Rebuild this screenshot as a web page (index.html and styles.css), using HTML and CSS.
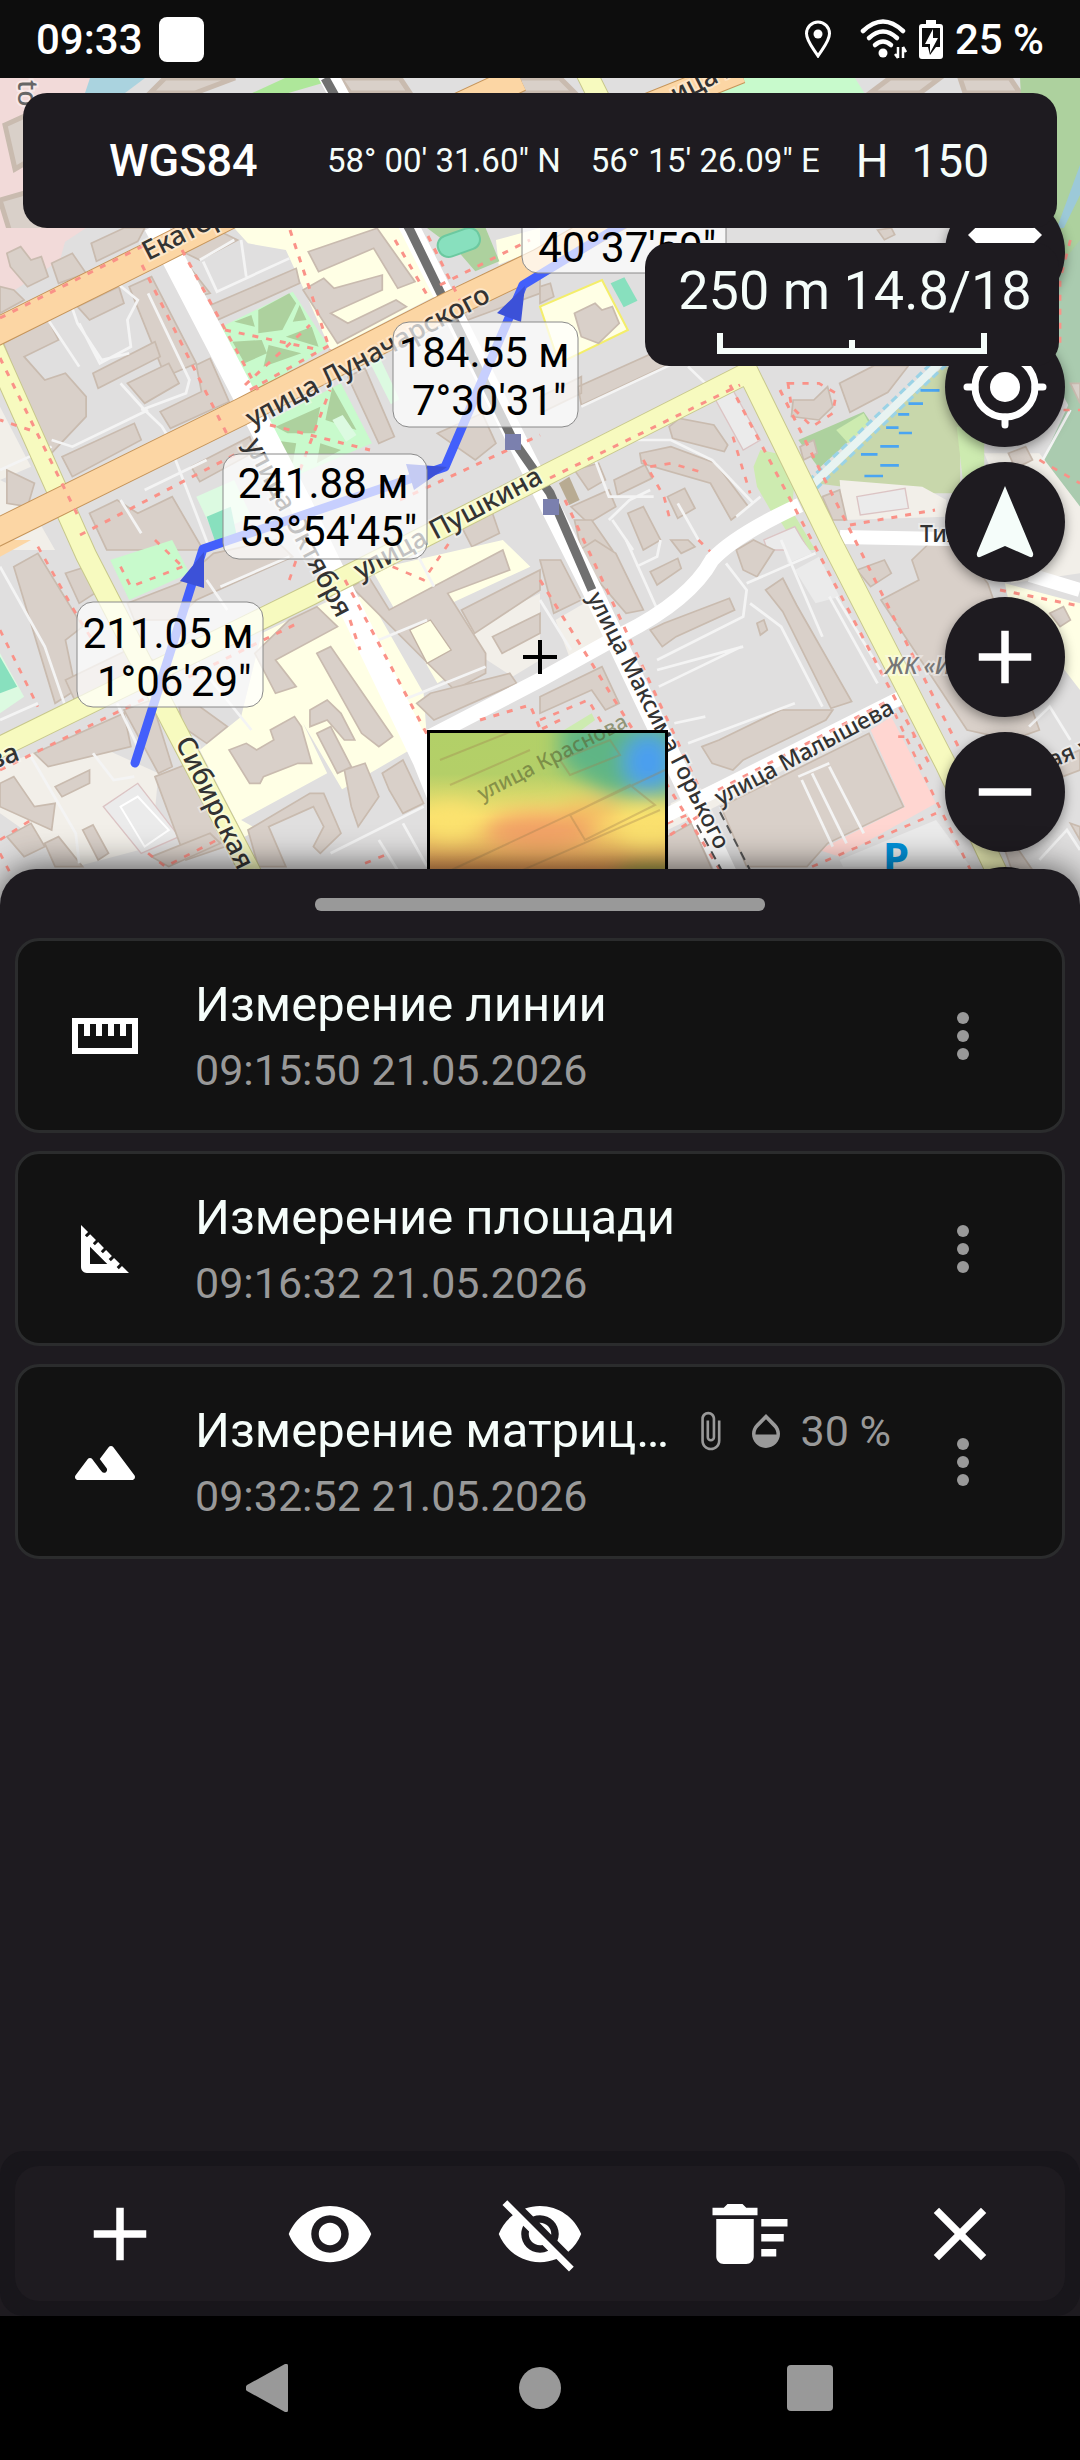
FILE: index.html
```html
<!DOCTYPE html>
<html lang="ru">

<head>
    <meta charset="UTF-8">
    <meta name="viewport" content="width=device-width, initial-scale=1.0">
    <title>Измерения</title>
    <link rel="stylesheet" href="styles.css">
</head>

<body>
    <!-- Status bar -->
    <header class="status-bar">
        <span>09:33</span>
        <span class="status-app"></span>
        <div class="status-icons">
            <svg class="status-pin" viewBox="0 0 28 38" width="28" height="38">
                <path d="M14 36C9 28 2.500 21 2.500 13.500a11.500 11.500 0 0 1 23 0C25.500 21 19 28 14 36z" fill="none" stroke="#fff" stroke-width="3"/>
                <circle cx="14" cy="14" r="4.500" fill="#fff"/>
            </svg>
            <svg viewBox="0 0 47 40" width="47" height="40">
                <g fill="none" stroke="#fff" stroke-width="4.500" stroke-linecap="round">
                    <path d="M3 12Q23-7 43 12"/>
                    <path d="M9 19Q23 6 37 19"/>
                    <path d="M15 26Q23 19 31 26"/>
                </g>
                <circle cx="23" cy="34" r="4.500" fill="#fff"/>
                <path d="M38 28v11M35 35l3 4M43 39V28M43 28l3 5" fill="none" stroke="#fff" stroke-width="2.500"/>
            </svg>
            <svg viewBox="0 0 24 39" width="24" height="39">
                <path d="M7 0h10v4h4q3 0 3 3v29q0 3-3 3H3q-3 0-3-3V7q0-3 3-3h4z" fill="#fff"/>
                <path d="M3 8h18v19h-4L11 35 9 27H3z" fill="#0d0d0d"/>
                <path d="M14 9L6 24h5v9l8-15h-5z" fill="#fff"/>
            </svg>
            <span>25 %</span>
        </div>
    </header>

    <main class="screen">
        <section class="map">
            <svg class="map-canvas" viewBox="0 78 1080 862" preserveAspectRatio="xMidYMin slice">
                <defs>
                    <linearGradient id="heat" x1="0" y1="0" x2="0" y2="1">
                        <stop offset="0" stop-color="#b2d068"/>
                        <stop offset=".25" stop-color="#b4cf68"/>
                        <stop offset=".5" stop-color="#fbe26e"/>
                        <stop offset=".7" stop-color="#efb862"/>
                        <stop offset="1" stop-color="#c5583c"/>
                    </linearGradient>
                    <filter id="soft" x="-50%" y="-50%" width="200%" height="200%">
                        <feGaussianBlur stdDeviation="10"/>
                    </filter>
                    <clipPath id="heat-clip">
                        <rect x="429" y="732" width="237" height="230"/>
                    </clipPath>
                </defs>
                <rect y="78" width="1080" height="862" fill="#e0dfdf"/>

                <!-- Strip above and beside the coordinate panel -->
                <path d="M0 78h110L60 260 0 300z" fill="#f2dad9"/>
                <path d="M90 78h55l-40 30H80z" fill="#aad3df"/>
                <g class="building">
                    <path d="M5 125l22-10 12 40-24 14z"/>
                    <path d="M0 200l28-8 18 40-30 20z"/>
                    <path d="M165 78h70l-40 15h-45z"/>
                    <path d="M340 78h60l10 15h-60z"/>
                    <path d="M520 78h40l15 15h-60z"/>
                    <path d="M890 78h50l-20 15h-50zM960 78h50l10 15h-55z"/>
                </g>
                <path d="M285 78h55l-55 16h-35z" fill="#aee79a"/>
                <path d="M725 78h130l10 16H700z" fill="#c8facc"/>
                <path d="M1020 78h60v230l-52-80z" fill="#add19e"/>
                <path d="M1080 165l-22 60v15l22-45z" fill="#9cc9d8"/>

                <!-- Upper left blocks -->
                <g transform="translate(0 220) scale(.3444 .3333)">
                    <path d="M0 24h250L20 180H0z" fill="#f2dad9"/>
                    <path d="M680 24h500L1280 220 960 390 870 180 830 90 720 70z" fill="#ffffe5"/>
                    <path d="M1440 60l128-36v60l-120 50z" fill="#ffffe5"/>
                    <path d="M635 325l215-110 105 165-230 145z" fill="#c8facc"/>
                    <path d="M765 610l225-120 90 180-250 110z" fill="#c8facc"/>
                    <path d="M1240 24h170l40 100-70 30-50-60z" fill="#add19e"/>
                    <g fill="#add19e">
                        <path d="M750 270l90-50 20 30-40 80-70 10zM675 365l85-5 15 40-65 30zM780 375l95 25-110 40zM680 305l50-20 10 35zM870 255l20 45-40 5zM830 350l75-30 20 60z"/>
                        <path d="M800 620l130-60-15 80-80 0zM965 500l70 130-90-30zM790 660l70 10-10 60zM930 670l60 20-70 40z"/>
                    </g>
                    <rect x="1270" y="35" width="125" height="65" rx="30" transform="rotate(-20 1332 68)" fill="#88e0be" stroke="#6cc9a0" stroke-width="6"/>
                    <path d="M965 600l30-15 40 60-30 20zM1075 430l30-12 55 120-25 15z" fill="#dcfae1"/>
                    <path d="M570 830l110-50 50 110-110 50z" fill="#dcfae1"/>
                    <path d="M600 890l70-30 20 100-60 20z" fill="#88e0be"/>
                    <path d="M420 960l90-40 30 70H420z" fill="#c8facc"/>
                    <path d="M0 560l90 180-90 40zM0 780l60 30 100 180H0z" fill="#f2efe9"/>
                    <g class="building">
                        <path d="M265 70l95-46h60l-20 40-120 60z"/>
                        <path d="M20 100l40-20 30 40 30-10 20 60-60 30-50-60zM150 130l60-30 40 60-80 30zM0 200l40 10 30 30-70 40z"/>
                        <path d="M225 260l120-60 15 50-100 50z"/>
                        <path d="M375 200l65-30 130 260-90 40z"/>
                        <path d="M10 370l130-70 30 60-100 50 60 70 60-20 60 70 0 60-110 120z"/>
                        <path d="M270 460l180-95 15 45-180 95z"/>
                        <path d="M370 490l120-60 30 60-100 60z"/>
                        <path d="M465 575l120-60-15-80 40-20 55 130-170 80z"/>
                        <path d="M515 95L610 220l-40 10zM520 90l110-60 60 30-110 60z"/>
                        <path d="M590 265l270-120 10 45-260 120z"/>
                        <path d="M895 95l200-70 110 160-50 20-70-120-160 70z"/>
                        <path d="M880 210l60-35 30 30 140-40v45l-150 70 50 30 140-70 30 20-200 110z"/>
                        <path d="M180 710l210-100 20 50-200 110z"/>
                        <path d="M20 750l80 40-20 70-60-10z"/>
                        <path d="M555 740l170-90 15 45-160 90z"/>
                        <path d="M260 880l80-40 60 40 100-50 90 160H310z"/>
                        <path d="M1010 470l50-25 85 205-45 20z"/>
                        <path d="M1340 270l228-110v60l-210 80z"/>
                        <path d="M1270 640l130-60 40 90-60 50z"/>
                        <path d="M1340 920l90-40 20 60-80 40z"/>
                    </g>
                    <path class="path" d="M205 250l20 60 70 110 80-20M340 190l60 50-30 60 10 80-90 50-60-120M140 300l90 140M580 120l100-60M700 60l15 110M590 125l40 90 210-100M430 220l120 260-10 40-130 50M350 490l70 80 50 50 30 50M150 660l60 20 220-110M480 640l130 350M0 750l150-70M350 840l60 100M420 810l180-90"/>
                </g>

                <!-- Upper right blocks -->
                <g transform="translate(540 220) scale(.3444 .3333)">
                    <path d="M0 260l180-80 75 150-200 100z" fill="#ffffe5" stroke="#f4ee6a" stroke-width="6"/>
                    <path d="M205 190l40-18 38 70-40 20z" fill="#88e0be"/>
                    <path d="M800 790l370-350h50v380h-190z" fill="#c8d7ab"/>
                    <path d="M640 690l90 20 10 60-10 120-50 0-50-90-10-60z" fill="#cdebb0"/>
                    <path d="M750 660l190-85 20 30-150 140z" fill="#add19e"/>
                    <path d="M860 630l80-50 15 30-60 60z" fill="#cdebb0"/>
                    <path d="M1490 24h78v200l-60 80z" fill="#add19e"/>
                    <path d="M1568 60v560l-90-170 30-310z" fill="#aacbaf"/>
                    <path d="M1450 740l118-260v420z" fill="#aacbaf"/>
                    <path d="M1210 620h80v180h-60z" fill="#cdebb0"/>
                    <path d="M870 780l240 20 70 40v50l-300 10zM1290 700l160 0 118 160v130H1400z" fill="#f2efe9"/>
                    <path d="M690 890l40-20 70 120h-50z" fill="#cdebb0"/>
                    <g class="building">
                        <path d="M100 280l60-30 20 20 30-10 20 50-60 60-50-20zM110 500l270-125 10 50-270 130zM0 530l120-60v50L0 580z"/>
                        <path d="M0 200l30-10 10 40-40 20z"/>
                        <path d="M735 540l60 0 40-40 15 60-40 40-80-10zM375 620l30-25 100 20 40 60-10 20-150-40z"/>
                        <path d="M290 700l90-20 130 50 95 130-50 40-60-110-200-60z"/>
                        <path d="M870 490l100-53h100l-60 80-110 60z"/>
                        <path d="M755 680l40-20 10 40-40 20zM215 780l90-45 20 40-100 50zM100 750l70-20 20 50-50 30zM90 860l110-50 20 50-80 50zM255 880l45-20 50 100-50 30zM370 830l50-25 30 60-50 30zM1360 700l50-20 20 40-50 25zM820 830l50-20 20 90-40 0z"/>
                        <path d="M100 900l50 0 60 90H120zM1540 490h28v60zM980 30l40-6 10 20-30 15z"/>
                    </g>
                    <path d="M510 540l50-30 80 150-50 30zM920 830l140-25 10 60-140 20zM650 960l90-40 40 70H660z" fill="#ebebeb" stroke="#dcc4c4" stroke-width="4"/>
                    <path d="M55 790l30-20 30 70-30 15z" fill="#b8ab92"/>
                    <path class="stream-edge" d="M790 795l380-375"/>
                    <path class="stream" d="M780 805l390-385"/>
                    <path d="M1105 511h55M1070 551h42M1040 583h32M1005 623h36M1042 639h38M988 679h54M932 703h48M988 736h54M942 768h54" stroke="#4aa5f2" stroke-width="8"/>
                    <path class="path" d="M120 560l310-150M260 660l120 0 120 60 120 130M160 720l40 110 130 0M200 900l60-60 60-30M210 900l60 90M430 440l80 80M1460 720l80-150M640 830l-70 60M400 850l60 110"/>
                    <path d="M1420 990l-60 0M1540 60l-30 120 0 200M1450 720l118 70M1520 570h48" class="footway footway-tile"/>
                    <path d="M300 720l60 110 20 80M320 740l60-10 100 30M560 650l50 170M720 490h90l50 30-10 60-60 40-60-60z" class="footway footway-tile"/>
                </g>

                <!-- Lower left blocks -->
                <g transform="translate(0 540) scale(.3444 .3333)">
                    <path d="M0 0h90L0 50z" fill="#fcd6a4"/>
                    <path d="M320 60l180-60 50 100-175 80z" fill="#c8facc"/>
                    <path d="M0 340l70 130-70 50z" fill="#dcfae1"/>
                    <path d="M0 350l50 90-50 20z" fill="#88e0be"/>
                    <path d="M760 280l220-110 90 0 160 290 10 140-100 60-200 120-230 110-130-260 120-100z" fill="#ffffe5"/>
                    <path d="M1080 90l380-90 80 80-230 110 60 180-100 60z" fill="#ffffe5"/>
                    <path d="M880 550l240 420h-200L700 840l250-140z" fill="#e0dfdf"/>
                    <path d="M0 680l140-60 150 0 170 80-20 220-220 60L0 820z" fill="#f2efe9"/>
                    <path d="M1310 290l258-130v200l-80 50z" fill="#f2efe9"/>
                    <path d="M300 800l100-70 120 160-110 50z" fill="#ebebeb" stroke="#dcc4c4" stroke-width="4"/>
                    <g class="building">
                        <path d="M40 80l70-40 130 220-50 40 30 150-60 40z"/>
                        <path d="M190 100l60-20 40 70-60 40z"/>
                        <path d="M370 190l150-60 100-90 180-40 50 50-280 130-60 60-120 0z"/>
                        <path d="M190 420l200-100 120 90-280 100z"/>
                        <path d="M100 640l260-120 20 100-240 60zM360 510l80-30 60 200-40 20z"/>
                        <path d="M450 710l100-40 160 230-170 60z"/>
                        <path d="M0 730l40-20 60 90 60-10-10 80L0 800zM20 890l70-40 40 70-60 30zM240 870l30-15 45 85-30 20zM160 740l100-50 0 40-80 40zM130 910l40-20 70 90h-80z"/>
                        <path d="M440 950l170-70 30 30-150 70z"/>
                        <path d="M520 500l60 0 80 60-60 50-70-50z"/>
                        <path d="M740 340l100-100 80-40 60 60-180 100 60 80-60 20z"/>
                        <path d="M665 630l50-20 30 20 50-30-10-30 70-40 20 30 30 110-40 0-100 40-10 20-30 0z"/>
                        <path d="M920 340l40-20 180 270-40 30-50-40z"/>
                        <path d="M900 510l50-30 40 40 40 80-30 0-50-60-50 20zM920 580l40-20 60 120-40 20zM1000 690l60-20 40 100-60 90-20-60zM1110 700l60-40 60 130-60 30-40-70z"/>
                        <path d="M1020 140l50-30 60 100 330-180 20 60-180 70 110 180 0 60-90 50z"/>
                        <path d="M1340 210l228-120v60l-190 130zM1430 290l138-70v60l-110 60zM1250 460l230-60 20 30-240 110-50-50z"/>
                        <path d="M720 870l180-110 40 0 50 120-60 60-20-20 30-60-30-60-130 60 50 120h-80z"/>
                    </g>
                    <path d="M1190 270l60-30 60 90-70 40z" fill="#ffffe5" stroke="#c3b3a5" stroke-width="4"/>
                    <path d="M350 800l50-30 90 100-70 50z" fill="none" stroke="#fff" stroke-width="6"/>
                    <path class="path" d="M0 80l130 240 60 180M90 650l130 230 10 90M340 490l60 130-20 60M270 640l60 80 60-10M550 340l180 230M0 540l110-50M1100 300l140-60M1170 480l240-100M960 940l270-140M1100 900l60 100M1170 850l70 130M600 120l60 90M1210 40l50 100M640 140l200-90"/>
                    <path d="M110 20l110 200 60 100M0 270l110 230M0 900l90-60M430 940l50 40 150-80M350 80l30 60 150-60M450 0l80 80M840 120l20-60M1140 80l90 40 80-120M1060 970l70-30M0 940l30 60" class="footway footway-tile"/>
                </g>

                <!-- Lower right blocks -->
                <g transform="translate(540 540) scale(.3444 .3333)">
                    <path d="M45 240l100-60 60 120-120 50z" fill="#f2efe9"/>
                    <path d="M740 90l70-40 60 120-70 20zM700 0h60l30 40-70 30z" fill="#ebebeb"/>
                    <path d="M960 570l60-40 130 260-280 160-60-20 250-130z" fill="#ffd6d1"/>
                    <path d="M370 870l140-70 450-250-20-20-560 260z" fill="#f2efe9"/>
                    <path d="M870 960l280-120 100 140H880z" fill="#ebebeb"/>
                    <path d="M70 570l80-50 10 20-80 60z" fill="#cdebb0"/>
                    <path d="M1350 0h218v100l-200 30z" fill="#f2efe9"/>
                    <path d="M1350 130l218 60v260l-60-80-150-200z" fill="#ffffe5"/>
                    <g class="building">
                        <path d="M0 60l60 0 60 120-80 40zM100 40l60-40 60 40 80 170-50 10z"/>
                        <path d="M320 95l80-40 10 30-70 50zM570 30l50-30 60 30-50 80-40-20zM380 0h50l20 20-40 20z"/>
                        <path d="M320 270l40-20 190-75 15 35-170 80-40 30z"/>
                        <path d="M655 150l50-35 40 80 160 290-60 20-140-290z"/>
                        <path d="M0 470l180-90 50 110-40 20-40-60-150 70z"/>
                        <path d="M470 620l50-20 180-90 90 0 60 0-20 30-240 120-30 30-60-20z"/>
                        <path d="M990 180l110-60-20-60 60-60h60l100 130 150 440-80 30-130-30z"/>
                        <path d="M525 800l430-220 100 220-220 110-60 70H600z"/>
                        <path d="M920 90l80-30 20 40-60 40zM630 250l20-10 10 30-20 15zM1480 220l40-20 20 40-30 20zM1500 660l68-30v60l-50 20zM1540 850l28 10v40zM1350 930l40 0 40 60h-60zM370 890l70-40 60 140H370z"/>
                    </g>
                    <path class="path" d="M250 0l100 230M280 80l60-30 10-50M540 70l60 80-10 80-250 130M610 190l90 70 120 240M340 390l250-70M345 440l240-120M390 550l90-20M430 610l310-120M700 0l120 290M840 170l140 260M860 170l140 240M760 720l90 200M790 700l100 210M840 680l100 200M750 710l90-40M600 130l200-90M0 180l90 150M1420 560l60-60 60 100M1450 960l80-90 38 60"/>
                    <path d="M0 540l140-60 40 70M460 0l60 60M1030 520l110 240 110 230M1040 590l50 0M790 980l360-160M370 850l90-40" class="footway footway-tile"/>
                </g>

                <!-- Roads -->
                <g fill="none">
                    <path d="M155 225L175 262 300 503 424 760 440 800" stroke="#fff" stroke-width="23"/>
                    <path d="M320 60L410 228 592 590 730 880" stroke="#fff" stroke-width="20"/>
                    <path d="M325 78L410 230 444 300 513 440 550 493 592 590" stroke="#707070" stroke-width="9"/>
                    <path d="M420 742L540 680 623 634Q690 600 712 560 735 535 800 505" stroke="#fff" stroke-width="15"/>
                    <path d="M560 870L667 815 900 698M840 537L1000 540M1030 575L1080 590" stroke="#fff" stroke-width="14"/>
                    <path d="M-10 752L310 595 540 478 757 368M-10 340L86 555 172 722 265 900M747 370L833 545 946 765 1010 900M580 60L600 100" class="road-edge"/>
                    <path d="M-10 752L310 595 540 478 757 368M-10 340L86 555 172 722 265 900M747 370L833 545 946 765 1010 900M580 60L600 100" class="road-yellow"/>
                    <path d="M-10 335L155 253 300 180 520 78M-10 536L241 412 448 306 540 262 700 170M640 110L740 70" stroke="#c6955a" stroke-width="28"/>
                    <path d="M-10 335L155 253 300 180 520 78M-10 536L241 412 448 306 540 262 700 170M640 110L740 70" stroke="#fcd6a4" stroke-width="26"/>
                </g>
                <g class="footway">
                    <path d="M142 265L230 440M182 250L258 390M428 236L460 300M290 230L330 350M395 240L430 300"/>
                    <path d="M0 318L145 245M80 535L240 452M440 285L530 240M250 390L330 345"/>
                    <path d="M225 330L320 350M245 385L310 325M270 425L370 450M300 470L330 390"/>
                    <path d="M0 770L300 622M345 580L430 740M565 500L700 790M540 580L720 870M730 385L930 765M780 390L1000 830"/>
                    <path d="M550 478L740 385M560 720L520 740M670 835L700 815M718 790L890 700M0 358L80 520"/>
                    <path d="M1000 590L1075 605M850 525L935 510M30 430L0 420"/>
                    <path d="M400 500L540 435M350 620L360 650M480 720L530 705 545 740"/>
                </g>
                <rect x="505" y="434" width="16" height="16" class="stop"/>
                <rect x="543" y="499" width="16" height="16" class="stop"/>
                <path d="M697 825L735 895M720 812L750 870" fill="none" stroke="#555" stroke-width="2" stroke-dasharray="9 6"/>

                <!-- Street names -->
                <g class="street">
                    <text x="148" y="261" transform="rotate(-27 148 261)">Екатеринин</text>
                    <text x="252" y="428" transform="rotate(-28 252 428)">улица Луначарского</text>
                    <text x="360" y="580" transform="rotate(-28 360 580)">улица Пушкина</text>
                    <text x="244" y="444" transform="rotate(62 244 444)">улица Октября</text>
                    <text x="175" y="742" transform="rotate(64 175 742)">Сибирская улица</text>
                    <text x="676" y="104" transform="rotate(-27 676 104)">ица Ле</text>
                    <text x="-8" y="770" transform="rotate(-20 -8 770)">ва</text>
                    <text x="18" y="80" transform="rotate(90 18 80)" fill="#666">to</text>
                </g>
                <g class="street street-small">
                    <text x="587" y="597" transform="rotate(63 587 597)">улица Максима Горького</text>
                    <text x="720" y="806" transform="rotate(-28 720 806)">улица Малышева</text>
                    <text x="920" y="542">Тихая</text>
                    <text x="1052" y="768" transform="rotate(-22 1052 768)">ая ул</text>
                    <text x="885" y="674" class="estate">ЖК «И</text>
                </g>

                <!-- Elevation matrix -->
                <g clip-path="url(#heat-clip)">
                    <rect x="428" y="731" width="238" height="172" fill="url(#heat)"/>
                    <g filter="url(#soft)">
                        <path d="M560 720h120v75l-70 0-50-30z" fill="#5fb585"/>
                        <ellipse cx="648" cy="762" rx="24" ry="28" fill="#4c9ff0"/>
                        <ellipse cx="540" cy="832" rx="55" ry="20" fill="#f2a266"/>
                        <ellipse cx="450" cy="822" rx="26" ry="18" fill="#fbe26e"/>
                        <ellipse cx="650" cy="832" rx="34" ry="15" fill="#fbe26e"/>
                        <ellipse cx="590" cy="812" rx="30" ry="10" fill="#f3b862"/>
                        <ellipse cx="655" cy="878" rx="40" ry="14" fill="#98a848"/>
                    </g>
                    <path d="M440 760l70-28M450 785l80-35M570 815l60-30 25 20-70 35zM430 880l235-110M500 880l160-70M560 760l50-20 10 15-50 20z" fill="none" stroke="#a08050" stroke-opacity=".35" stroke-width="2"/>
                </g>
                <text x="482" y="801" transform="rotate(-27 482 801)" class="street street-faded">улица Краснова</text>
                <path d="M428.500 945V731.500h238V945" fill="none" stroke="#000" stroke-width="3"/>
                <text x="883" y="873" class="parking">P</text>

                <!-- Measured line -->
                <path d="M135 763L203 549 445 467 523 285 610 232 700 180" fill="none" stroke="#435ffb" stroke-width="9" stroke-linecap="round" stroke-linejoin="round"/>
                <path d="M204 552l-24 29 24 7zM447 467l-41-3 8 26zM525 286l-28 27 24 9z" fill="#3c51d8"/>

                <!-- Segment labels -->
                <g class="plate">
                    <rect x="77" y="602" width="186" height="105" rx="16"/>
                    <rect x="223" y="454" width="204" height="105" rx="16"/>
                    <rect x="393" y="322" width="185" height="105" rx="16"/>
                    <rect x="522" y="168" width="204" height="105" rx="16"/>
                </g>
                <g class="measure">
                    <text x="168" y="648">211.05 м</text>
                    <text x="169" y="696">&nbsp;1°06'29"</text>
                    <text x="323" y="498">241.88 м</text>
                    <text x="323" y="546">&nbsp;53°54'45"</text>
                    <text x="484" y="367">184.55 м</text>
                    <text x="484" y="415">&nbsp;7°30'31"</text>
                    <text x="622" y="262">&nbsp;40°37'59"</text>
                </g>
                <path d="M523 657h34M540 640v34" stroke="#000" stroke-width="4"/>
            </svg>

            <div class="map-buttons">
                <button type="button" class="map-button" aria-label="Слои">
                    <svg viewBox="0 0 90 90" width="90" height="90">
                        <path d="M45-8L8 28l37 37 37-37z" fill="#fff"/>
                    </svg>
                </button>
                <button type="button" class="map-button" aria-label="Моё местоположение">
                    <svg viewBox="0 0 90 90" width="90" height="90">
                        <g fill="none" stroke="#fff" stroke-width="7" stroke-linecap="round">
                            <circle cx="45" cy="45" r="30"/>
                            <path d="M45 7v8M45 75v8M7 45h8M75 45h8"/>
                        </g>
                        <circle cx="45" cy="45" r="15" fill="#fff"/>
                    </svg>
                </button>
                <button type="button" class="map-button" aria-label="Север">
                    <svg viewBox="0 0 90 90" width="90" height="90">
                        <path d="M45 9l28 67q1 5-3 4L45 69 20 80q-4 1-3-4z" fill="#f5fdfa"/>
                    </svg>
                </button>
                <button type="button" class="map-button" aria-label="Приблизить">
                    <svg viewBox="0 0 24 24" width="90" height="90"><path d="M19 13h-6v6h-2v-6H5v-2h6V5h2v6h6z" fill="#fff"/></svg>
                </button>
                <button type="button" class="map-button" aria-label="Отдалить">
                    <svg viewBox="0 0 24 24" width="90" height="90"><path d="M19 13H5v-2h14z" fill="#fff"/></svg>
                </button>
                <button type="button" class="map-button" aria-label="Ещё"></button>
            </div>

            <div class="coords">
                <strong class="coords-system">WGS84</strong>
                <span class="coords-value">58° 00' 31.60" N</span>
                <span class="coords-value">56° 15' 26.09" E</span>
                <span class="coords-height">H&nbsp; 150</span>
            </div>

            <div class="scale">
                <div class="scale-text">250 m 14.8/18</div>
                <div class="scale-ruler"></div>
            </div>
        </section>

        <!-- Bottom sheet with the list of measurements -->
        <section class="sheet">
            <div class="sheet-handle"></div>
            <ul class="cards">
                <li class="card">
                    <svg class="card-icon" viewBox="0 0 24 24"><path d="M1 6h22v12H1zM3 8v8h18V8h-2v4h-2V8h-2v4h-2V8h-2v4H9V8H7v4H5V8z" fill-rule="evenodd"/></svg>
                    <div class="card-text">
                        <h2 class="card-title">Измерение линии</h2>
                        <p class="card-date">09:15:50 21.05.2026</p>
                    </div>
                    <button type="button" class="card-menu" aria-label="Меню">
                        <svg viewBox="0 0 24 24"><circle cx="12" cy="6" r="2"/><circle cx="12" cy="12" r="2"/><circle cx="12" cy="18" r="2"/></svg>
                    </button>
                </li>
                <li class="card">
                    <svg class="card-icon" viewBox="0 0 24 24"><path d="M17.660 17.660l-1.060 1.060-.710-.710 1.060-1.060-1.940-1.940-1.060 1.060-.710-.710 1.060-1.060-1.940-1.940-1.060 1.060-.710-.710 1.060-1.060L9.700 9.700l-1.060 1.060-.710-.710 1.060-1.060-1.940-1.940-1.060 1.060-.710-.710 1.060-1.060L4 4v14c0 1.100.900 2 2 2h14l-2.340-2.340zM7 17v-5.760L12.760 17H7z"/></svg>
                    <div class="card-text">
                        <h2 class="card-title">Измерение площади</h2>
                        <p class="card-date">09:16:32 21.05.2026</p>
                    </div>
                    <button type="button" class="card-menu" aria-label="Меню">
                        <svg viewBox="0 0 24 24"><circle cx="12" cy="6" r="2"/><circle cx="12" cy="12" r="2"/><circle cx="12" cy="18" r="2"/></svg>
                    </button>
                </li>
                <li class="card">
                    <svg class="card-icon" viewBox="0 0 24 24"><path d="M13.200 7.070L10.250 11l2.250 3c.330.440.240 1.070-.200 1.400-.440.330-1.070.250-1.400-.200-1.050-1.400-2.310-3.070-3.100-4.140-.400-.530-1.200-.530-1.600 0l-4 5.330c-.490.670-.020 1.610.800 1.610h18c.820 0 1.290-.940.800-1.600l-7-9.330c-.400-.540-1.200-.540-1.600 0z"/></svg>
                    <div class="card-text">
                        <div class="card-row">
                            <h2 class="card-title">Измерение матрицы высот</h2>
                            <svg class="card-mark" viewBox="0 0 24 24"><path d="M16.500 6v11.500c0 2.210-1.790 4-4 4s-4-1.790-4-4V5c0-1.380 1.120-2.500 2.500-2.500s2.500 1.120 2.500 2.500v10.500c0 .550-.450 1-1 1s-1-.450-1-1V6H10v9.500c0 1.380 1.120 2.500 2.500 2.500s2.500-1.120 2.500-2.500V5c0-2.210-1.790-4-4-4S7 2.790 7 5v12.500c0 3.040 2.460 5.500 5.500 5.500s5.500-2.460 5.500-5.500V6z"/></svg>
                            <svg class="card-mark" viewBox="0 0 24 24"><path d="M17.660 8L12 2.350 6.340 8C4.780 9.560 4 11.640 4 13.640s.780 4.110 2.340 5.670 3.610 2.350 5.660 2.350 4.100-.790 5.660-2.350S20 15.640 20 13.640 19.220 9.560 17.660 8zM6 14c.010-2 .620-3.270 1.760-4.400L12 5.270l4.240 4.380C17.380 10.770 17.990 12 18 14z"/></svg>
                            <span class="card-opacity">30 %</span>
                        </div>
                        <p class="card-date">09:32:52 21.05.2026</p>
                    </div>
                    <button type="button" class="card-menu" aria-label="Меню">
                        <svg viewBox="0 0 24 24"><circle cx="12" cy="6" r="2"/><circle cx="12" cy="12" r="2"/><circle cx="12" cy="18" r="2"/></svg>
                    </button>
                </li>
            </ul>

            <div class="toolbar">
                <div class="toolbar-inner">
                    <button type="button" class="tool" aria-label="Добавить">
                        <svg viewBox="0 0 24 24"><path d="M19 13h-6v6h-2v-6H5v-2h6V5h2v6h6z"/></svg>
                    </button>
                    <button type="button" class="tool" aria-label="Показать все">
                        <svg viewBox="0 0 24 24"><path d="M12 4.500C7 4.500 2.730 7.610 1 12c1.730 4.390 6 7.500 11 7.500s9.270-3.110 11-7.500c-1.730-4.390-6-7.500-11-7.500zM12 17c-2.760 0-5-2.240-5-5s2.240-5 5-5 5 2.240 5 5-2.240 5-5 5zm0-8c-1.660 0-3 1.340-3 3s1.340 3 3 3 3-1.340 3-3-1.340-3-3-3z"/></svg>
                    </button>
                    <button type="button" class="tool" aria-label="Скрыть все">
                        <svg viewBox="0 0 24 24"><path d="M12 7c2.760 0 5 2.240 5 5 0 .650-.130 1.260-.360 1.830l2.920 2.920c1.510-1.260 2.700-2.890 3.430-4.750-1.730-4.390-6-7.500-11-7.500-1.400 0-2.740.250-3.980.700l2.160 2.160C10.740 7.130 11.350 7 12 7zM2 4.270l2.280 2.280.460.460C3.080 8.300 1.780 10.020 1 12c1.730 4.390 6 7.500 11 7.500 1.550 0 3.030-.300 4.380-.840l.420.420L19.730 22 21 20.730 3.270 3 2 4.270zM7.530 9.800l1.550 1.550c-.050.210-.080.430-.080.650 0 1.660 1.340 3 3 3 .220 0 .440-.030.650-.080l1.550 1.550c-.670.330-1.410.530-2.200.530-2.760 0-5-2.240-5-5 0-.790.200-1.530.530-2.200zm4.310-.780l3.150 3.150.020-.160c0-1.660-1.340-3-3-3l-.170.010z"/></svg>
                    </button>
                    <button type="button" class="tool" aria-label="Удалить все">
                        <svg viewBox="0 0 24 24"><path d="M15 16h4v2h-4zm0-8h7v2h-7zm0 4h6v2h-6zM3 18c0 1.100.900 2 2 2h6c1.100 0 2-.900 2-2V8H3v10zM14 5h-3l-1-1H6L5 5H2v2h12z"/></svg>
                    </button>
                    <button type="button" class="tool" aria-label="Закрыть">
                        <svg viewBox="0 0 24 24"><path d="M19 6.410L17.590 5 12 10.590 6.410 5 5 6.410 10.590 12 5 17.590 6.410 19 12 13.410 17.590 19 19 17.590 13.410 12z"/></svg>
                    </button>
                </div>
            </div>
        </section>
    </main>

    <!-- System navigation -->
    <nav class="nav-bar">
        <button type="button" class="nav-button" aria-label="Назад">
            <svg viewBox="0 0 48 48"><path d="M39 0q3-1 3 2v44q0 3-3 2L1 27q-3-3 0-6z"/></svg>
        </button>
        <button type="button" class="nav-button" aria-label="Домой">
            <svg viewBox="0 0 48 48"><circle cx="24" cy="24" r="21"/></svg>
        </button>
        <button type="button" class="nav-button" aria-label="Обзор">
            <svg viewBox="0 0 48 48"><rect x="1" y="1" width="46" height="46" rx="4"/></svg>
        </button>
    </nav>
</body>

</html>
```
FILE: styles.css
```css
/* General styles */
* {
    box-sizing: border-box;
    margin: 0;
    padding: 0;
}

/* Color palette */
:root {
    --surface: #1e1b20;
    --surface-dark: #18161b;
    --card: #121212;
    --card-border: #2b2c2d;
    --text: #f5fdfa;
    --text-muted: #999999;
}

body {
    display: flex;
    flex-direction: column;
    min-height: 100vh;
    background-color: #000;
    color: var(--text);
    font-family: Roboto, "Liberation Sans", sans-serif;
}

button {
    border: none;
    background: none;
    cursor: pointer;
}

svg {
    display: block;
}

/* Status bar */
.status-bar {
    display: flex;
    align-items: center;
    gap: 16px;
    height: 78px;
    padding: 0 36px;
    background-color: #0d0d0d;
    color: #fff;
    font-size: 42px;
    font-weight: 500;
}

.status-app {
    width: 45px;
    height: 45px;
    border-radius: 8px;
    background-color: #fff;
}

.status-icons {
    display: flex;
    align-items: center;
    gap: 12px;
    margin-left: auto;
}

.status-pin {
    margin-right: 16px;
}

/* Map */
.screen {
    display: flex;
    flex-direction: column;
    flex: 1;
}

.map {
    position: relative;
    height: 862px;
    padding: 15px 23px;
    overflow: hidden;
}

.map-canvas {
    position: absolute;
    top: 0;
    left: 0;
    width: 100%;
    height: 100%;
}

.building {
    fill: #d9d0c9;
    stroke: #c9bbaf;
    stroke-width: 5px;
}

.path {
    fill: none;
    stroke: #f4f4f4;
    stroke-width: 8px;
}

.footway {
    fill: none;
    stroke: #fa9288;
    stroke-width: 3px;
    stroke-dasharray: 6 8;
}

.footway-tile {
    stroke-width: 8px;
    stroke-dasharray: 18 24;
}

.stream {
    fill: none;
    stroke: #e8f3f1;
    stroke-width: 24px;
}

.stream-edge {
    fill: none;
    stroke: #9bd3e6;
    stroke-width: 42px;
    stroke-dasharray: 22 12;
}

.road-edge {
    stroke: #c8c88c;
    stroke-width: 22px;
}

.road-yellow {
    stroke: #f7fabf;
    stroke-width: 20px;
}

.stop {
    fill: #7b80ae;
}

.street {
    font-family: "Noto Sans", sans-serif;
    font-size: 27px;
    font-weight: 500;
    fill: #333;
    stroke: rgba(255, 255, 255, 0.4);
    stroke-width: 4px;
    paint-order: stroke;
}

.street-small {
    font-size: 23px;
}

.street-faded {
    font-size: 21px;
    fill: rgba(90, 100, 50, 0.6);
    stroke: none;
}

.estate {
    font-style: italic;
    fill: #777;
}

.parking {
    font-family: "Noto Sans", sans-serif;
    font-size: 42px;
    font-weight: 700;
    fill: #0092da;
}

.plate {
    fill: rgba(255, 255, 255, 0.7);
    stroke: #8a8a8a;
    stroke-width: 1px;
}

.measure {
    font-size: 42px;
    text-anchor: middle;
    fill: #000;
}

.map-buttons {
    position: absolute;
    top: 114px;
    right: 15px;
    display: flex;
    flex-direction: column;
    gap: 15px;
}

.map-button {
    display: flex;
    align-items: center;
    justify-content: center;
    width: 120px;
    height: 120px;
    border-radius: 50%;
    background-color: var(--surface);
    box-shadow: 0 4px 12px rgba(0, 0, 0, 0.4);
}

/* Coordinate panel */
.coords {
    position: relative;
    display: flex;
    align-items: center;
    gap: 30px;
    height: 135px;
    padding: 0 68px 0 86px;
    border-radius: 24px;
    background-color: var(--surface);
}

.coords-system {
    margin-right: auto;
    color: #fff;
    font-size: 45px;
    font-weight: 500;
}

.coords-value {
    font-size: 33px;
}

.coords-height {
    margin-left: 6px;
    font-size: 46px;
}

/* Scale of the map */
.scale {
    position: absolute;
    top: 165px;
    right: 21px;
    width: 414px;
    height: 123px;
    padding: 16px 24px 12px;
    border-radius: 24px;
    background-color: var(--surface);
}

.scale-text {
    padding-left: 6px;
    font-size: 54px;
    line-height: 64px;
    text-align: center;
    white-space: nowrap;
}

.scale-ruler {
    position: relative;
    width: 270px;
    height: 21px;
    margin: 10px auto 0;
    border: 6px solid var(--text);
    border-top: none;
}

.scale-ruler::after {
    content: "";
    position: absolute;
    left: 50%;
    bottom: 0;
    width: 6px;
    height: 8px;
    margin-left: -3px;
    background-color: var(--text);
}

/* Bottom sheet */
.sheet {
    position: relative;
    display: flex;
    flex-direction: column;
    flex: 1;
    margin-top: -71px;
    padding-top: 29px;
    border-radius: 36px 36px 0 0;
    background-color: var(--surface);
    box-shadow: 0 0 36px rgba(0, 0, 0, 0.7);
}

.sheet-handle {
    width: 450px;
    height: 13px;
    margin: 0 auto 27px;
    border-radius: 6px;
    background-color: var(--text-muted);
}

.cards {
    display: flex;
    flex-direction: column;
    flex: 1;
    gap: 18px;
    padding: 0 15px;
    list-style: none;
}

.card {
    display: flex;
    align-items: center;
    height: 195px;
    padding: 0 63px 0 51px;
    border: 3px solid var(--card-border);
    border-radius: 24px;
    background-color: var(--card);
}

.card-icon {
    width: 72px;
    height: 72px;
    fill: #fff;
}

.card-text {
    flex: 1;
    min-width: 0;
    margin-left: 54px;
    padding-top: 2px;
}

.card-row {
    display: flex;
    align-items: center;
    gap: 14px;
    padding-right: 36px;
}

.card-title {
    flex: 1;
    overflow: hidden;
    font-size: 49px;
    font-weight: 400;
    line-height: 66px;
    text-overflow: ellipsis;
    white-space: nowrap;
}

.card-mark {
    width: 42px;
    height: 42px;
    fill: var(--text-muted);
}

.card-opacity,
.card-date {
    color: var(--text-muted);
    font-size: 43px;
    line-height: 64px;
}

.card-menu svg {
    width: 72px;
    height: 72px;
    fill: var(--text-muted);
}

/* Toolbar */
.toolbar {
    padding: 15px;
    border-radius: 24px;
    background-color: var(--surface-dark);
}

.toolbar-inner {
    display: flex;
    height: 135px;
    border-radius: 24px;
    background-color: var(--surface);
}

.tool {
    display: flex;
    align-items: center;
    justify-content: center;
    flex: 1;
}

.tool svg {
    width: 90px;
    height: 90px;
    fill: #fff;
}

/* System navigation */
.nav-bar {
    display: flex;
    justify-content: center;
    height: 144px;
    background-color: #000;
}

.nav-button {
    display: flex;
    align-items: center;
    justify-content: center;
    width: 25%;
}

.nav-button svg {
    width: 48px;
    height: 48px;
    fill: var(--text-muted);
}
```
